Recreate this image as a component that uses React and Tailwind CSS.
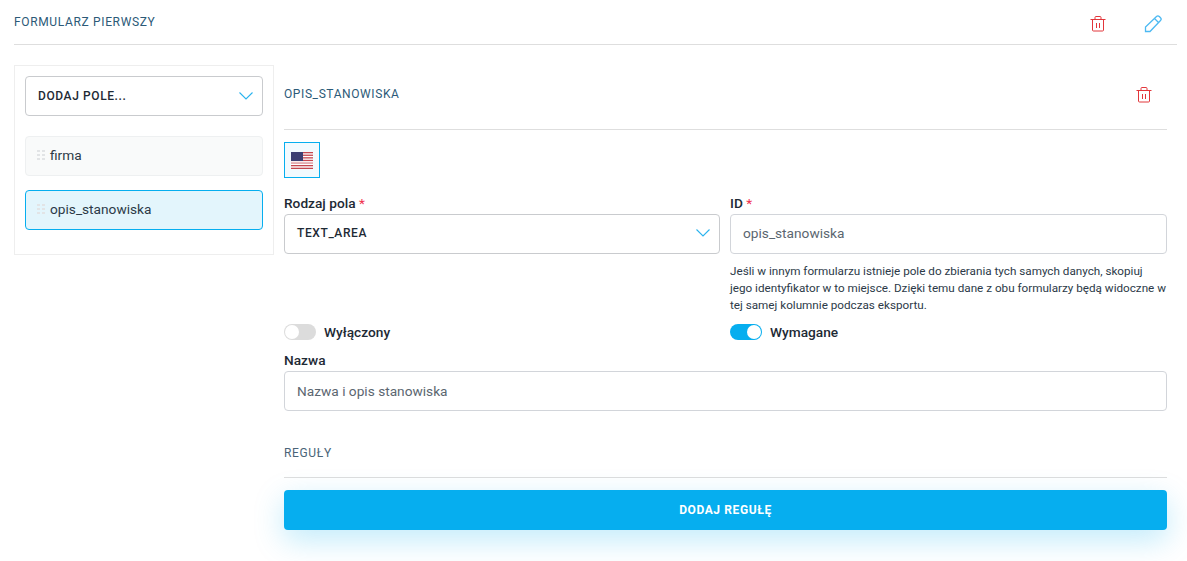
const TrashIcon = ({ className }) => (
  <svg viewBox="0 0 16 16" fill="none" stroke="currentColor" strokeWidth="1" className={className}>
    <path d="M0.5 3.5h15" />
    <path d="M5 3.5v-2a1 1 0 0 1 1-1h4a1 1 0 0 1 1 1v2" />
    <path d="M2.5 3.5v10.5a1 1 0 0 0 1 1h9a1 1 0 0 0 1-1v-10.5" />
    <path d="M6.5 7v5M9.5 7v5" />
  </svg>
);

const PencilIcon = ({ className }) => (
  <svg viewBox="0 0 18 18" fill="none" stroke="currentColor" strokeWidth="1.3" className={className}>
    <path d="M12.5 1.5a2 2 0 0 1 2.8 0l1.2 1.2a2 2 0 0 1 0 2.8L6 16.5H1.5V12z" />
    <path d="M10.5 3.5l4 4" />
  </svg>
);

const Chevron = () => (
  <svg viewBox="0 0 14 8" fill="none" stroke="currentColor" strokeWidth="1.1" className="w-3.5 h-2 text-[#2ab3ee]">
    <path d="M0.5 0.5L7 7L13.5 0.5" />
  </svg>
);

const Grip = () => (
  <svg viewBox="0 0 8 10" className="w-2 h-2.5 shrink-0 text-[#e2e4e6]" fill="currentColor">
    <rect x="0" y="0" width="3" height="2" />
    <rect x="5" y="0" width="3" height="2" />
    <rect x="0" y="4" width="3" height="2" />
    <rect x="5" y="4" width="3" height="2" />
    <rect x="0" y="8" width="3" height="2" />
    <rect x="5" y="8" width="3" height="2" />
  </svg>
);

const Flag = () => (
  <svg viewBox="0 0 22 17" className="w-[22px] h-[17px]">
    <rect width="22" height="17" fill="#fff" />
    <rect y="0" width="22" height="1.3" fill="#c4474f" />
    <rect y="2.6" width="22" height="1.3" fill="#c4474f" />
    <rect y="5.2" width="22" height="1.3" fill="#c4474f" />
    <rect y="7.8" width="22" height="1.3" fill="#c4474f" />
    <rect y="10.4" width="22" height="1.3" fill="#d98a90" />
    <rect y="13" width="22" height="1.3" fill="#c4474f" />
    <rect y="15.7" width="22" height="1.3" fill="#c4474f" />
    <rect width="12" height="9" fill="#3c3f72" />
  </svg>
);

const Toggle = ({ on, label }) => (
  <div className="flex items-center gap-2 h-4">
    <div className={`w-8 h-4 rounded-full relative ${on ? "bg-[#06aeef]" : "bg-[#dcdcdc]"}`}>
      <div className={`absolute top-px w-3.5 h-3.5 rounded-full bg-white ${on ? "right-px" : "left-px"}`} />
    </div>
    <span className="text-[13.7px] font-medium text-[#1e2a35]">{label}</span>
  </div>
);

const Label = ({ children, required }) => (
  <div className={`h-5 text-[13.7px] font-medium text-[#1e2a35] ${required ? "leading-[18px]" : "leading-5"}`}>
    {children}
    {required && <span className="text-[#f0314e] font-normal"> *</span>}
  </div>
);

const Field = ({ children, raised }) => (
  <div className={`h-10 px-3 flex items-center border border-[#d2d5da] rounded bg-white text-[13.7px] text-[#5b6670] ${raised ? "pb-0.5" : ""}`}>
    {children}
  </div>
);

export default function App() {
  return (
    <div className="w-[1187px] h-[561px] overflow-hidden bg-white pl-3.5 pr-2.5 font-['Roboto',sans-serif]">
      <div className="h-[45px] flex items-center justify-between border-b border-[#dedede]">
        <span className="text-xs font-[450] tracking-[0.65px] text-[#2c5a78]">FORMULARZ PIERWSZY</span>
        <div className="flex items-center gap-[38px] pr-[15px] mt-[3px]">
          <TrashIcon className="w-4 h-4 text-[#e2363b]" />
          <PencilIcon className="w-[18px] h-[18px] text-[#4cb9f2]" />
        </div>
      </div>

      <div className="flex items-start gap-2.5 mt-5">
        <div className="w-[260px] h-[190px] border border-[#eeeeee] p-2.5 shrink-0">
          <div className="h-10 flex items-center justify-between pl-3 pr-[9px] border border-[#c9cbce] rounded">
            <span className="text-xs font-medium tracking-[0.6px] text-[#1e2a35]">DODAJ POLE...</span>
            <Chevron />
          </div>
          <div className="mt-5 h-10 pb-0.5 flex items-center gap-[5px] pl-[11px] border border-[#eef0f1] rounded bg-[#f9fafa]">
            <Grip />
            <span className="text-[13.7px] text-[#2c3a48]">firma</span>
          </div>
          <div className="mt-3.5 h-10 pb-0.5 flex items-center gap-[5px] pl-[11px] border border-[#06aeef] rounded bg-[#e3f5fc]">
            <Grip />
            <span className="text-[13.7px] text-[#2c3a48]">opis_stanowiska</span>
          </div>
        </div>

        <div className="w-[883px] mt-px">
          <div className="h-[64px] flex items-start justify-between border-b border-[#dedede]">
            <span className="mt-5 text-xs font-[450] tracking-[0.6px] text-[#2c5a78]">OPIS_STANOWISKA</span>
            <TrashIcon className="w-4 h-4 mt-[21px] mr-[15px] text-[#e2363b]" />
          </div>

          <div className="mt-3 w-9 h-9 flex items-center justify-center border border-[#06aeef] bg-[#f2fafe]">
            <Flag />
          </div>

          <div className="grid grid-cols-[436px_437px] gap-x-2.5 mt-4">
            <div>
              <Label required>Rodzaj pola</Label>
              <div className="h-10 pl-3 pr-[9px] pb-0.5 flex items-center justify-between border border-[#c9cbce] rounded">
                <span className="text-xs font-medium tracking-[0.6px] text-[#1e2a35]">TEXT_AREA</span>
                <Chevron />
              </div>
            </div>
            <div>
              <Label required>ID</Label>
              <Field raised>opis_stanowiska</Field>
              <p className="mt-[9px] text-[11.7px] leading-[17px] text-[#2c3a48] whitespace-nowrap">
                Jeśli w innym formularzu istnieje pole do zbierania tych samych danych, skopiuj
                <br />
                jego identyfikator w to miejsce. Dzięki temu dane z obu formularzy będą widoczne w
                <br />
                tej samej kolumnie podczas eksportu.
              </p>
            </div>
          </div>

          <div className="grid grid-cols-[436px_437px] gap-x-2.5 mt-2.5">
            <Toggle label="Wyłączony" />
            <Toggle on label="Wymagane" />
          </div>

          <div className="mt-2.5">
            <Label>Nazwa</Label>
            <div className="mt-px">
              <Field>Nazwa i opis stanowiska</Field>
            </div>
          </div>

          <div className="mt-[34px] h-[33px] border-b border-[#dedede] text-xs font-[450] tracking-[0.65px] text-[#4a6478]">
            REGUŁY
          </div>

          <button className="mt-3 w-full h-10 rounded bg-[#06aeef] text-white text-xs font-bold tracking-[0.6px] shadow-[0_10px_30px_rgba(6,174,239,0.25)]">
            DODAJ REGUŁĘ
          </button>
        </div>
      </div>
    </div>
  );
}
